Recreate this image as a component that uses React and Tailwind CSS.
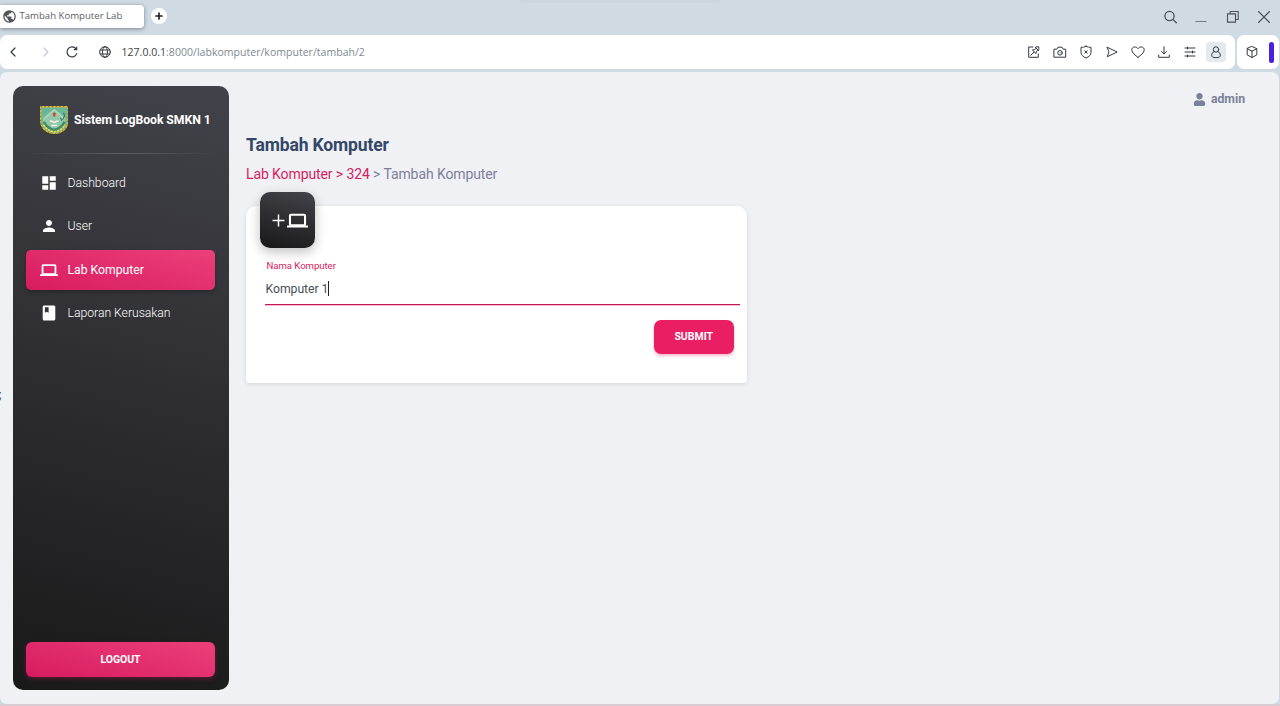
import React from "react";
import { MdDashboard, MdPerson, MdPublic } from "react-icons/md";
import { FaUser } from "react-icons/fa";

function Icon({ children, size = 14, className = "", vb = 14, w = 1 }) {
  return (
    <svg width={size} height={size} viewBox={`0 0 ${vb} ${vb}`} fill="none" stroke="currentColor" strokeWidth={w} strokeLinecap="round" strokeLinejoin="round" className={`shrink-0 ${className}`}>
      {children}
    </svg>
  );
}

function Laptop({ className }) {
  return (
    <svg viewBox="0 0 24 24" fill="none" stroke="currentColor" className={className}>
      <rect x="3.400" y="5.400" width="17.200" height="12" rx="1" strokeWidth="2.400" />
      <path d="M0 18.800h24" strokeWidth="2.400" />
    </svg>
  );
}

function Book({ className }) {
  return (
    <svg viewBox="0 0 18 18" className={className}>
      <path fill="currentColor" fillRule="evenodd" d="M4.200 1.600h9.600c.9 0 1.500.6 1.500 1.500v11.800c0 .9-.6 1.500-1.500 1.500H4.200c-.9 0-1.500-.6-1.500-1.500V3.100c0-.9.600-1.500 1.500-1.500zM4.900 3.200v5.500l1.850-1 1.850 1V3.200z" />
    </svg>
  );
}

function TabStrip() {
  return (
    <div className="flex h-[35px] shrink-0 items-start justify-between">
      <div className="flex items-start">
        <div className="mt-[4.500px] flex h-[23.500px] w-[143.500px] items-center rounded-r-[4px] bg-white pl-[2px] shadow-[0_1px_4px_rgba(60,75,90,0.6)]">
          <MdPublic className="size-[15px] shrink-0 text-[#50555a]" />
          <span className="ml-[2.500px] whitespace-nowrap font-['Open_Sans',sans-serif] text-[9.600px] leading-none text-[#5d6064]">Tambah Komputer Lab</span>
        </div>
        <div className="ml-[7.500px] mt-[8px] flex size-[16px] items-center justify-center rounded-full bg-white text-[#22262a]">
          <Icon size={8} vb={8} w={1.7}><path d="M4 1v6M1 4h6" /></Icon>
        </div>
      </div>
      <div className="-ml-[90px] h-[2px] w-[200px] bg-[#c9d3dd] blur-[1px]" />
      <div className="mr-[9px] mt-[9.500px] flex items-center text-[#4a5055]">
        <Icon size={14} w={1.3}><circle cx="6.500" cy="6" r="4.600" /><path d="M9.900 9.400l3.400 3.400" /></Icon>
        <svg width="12" height="14" viewBox="0 0 12 14" className="ml-[18.500px]"><path d="M.5 11.500h11" stroke="#727980" strokeWidth="1" /></svg>
        <Icon size={14} className="ml-[18.500px]" w={1.1}><path d="M4.200 3.500V1.500h8v8h-2.200M1.500 3.900h8v8.200h-8z" strokeLinejoin="miter" /></Icon>
        <Icon size={14} className="ml-[17.500px]" w={1.1}><path d="M1.500 1.500l11 11M12.500 1.500l-11 11" /></Icon>
      </div>
    </div>
  );
}

function Toolbar() {
  return (
    <div className="flex h-[34px] shrink-0 text-[#343a40]">
      <div className="flex flex-1 items-center rounded-[7px] bg-white">
        <Icon className="ml-[6px]" w={1.2}><path d="M9 3L5 7l4 4" /></Icon>
        <Icon className="ml-[19px] text-[#c3c8cc]" w={1.2}><path d="M5 3l4 4-4 4" /></Icon>
        <Icon className="ml-[12px]" w={1.2}><path d="M11.700 8.600A5 5 0 1 1 11 3.900M11.700 2.200v2.500H9.300" /></Icon>
        <Icon className="ml-[19px]" w={1}><circle cx="7" cy="7" r="5.300" /><ellipse cx="7" cy="7" rx="2.500" ry="5.300" /><path d="M2.200 5h9.600M2.200 9h9.600" /></Icon>
        <span className="ml-[9.500px] flex-1 whitespace-nowrap font-['Open_Sans',sans-serif] text-[10.500px] leading-none tracking-[0.03px] text-[#7d8992]">
          <span className="text-[#3c4145]">127.0.0.1</span>:8000/labkomputer/komputer/tambah/2
        </span>
        <div className="mr-[12px] flex items-center gap-[11.900px]">
          <Icon><path d="M6 2H1.700v10.300h9.600V9" /><path d="M8.300 2.300l3.400 3.400M9.300 3.300l-2.100 1.500-1.800.2 3.600 3.600.3-1.800 1.600-2M7 7l-3.200 3.200M9.300 1.800h2.500v2.500" /></Icon>
          <Icon><path d="M1.300 4.200h2.500l1.200-2h4l1.200 2h2.500v8H1.300z" /><circle cx="7" cy="7.800" r="2.300" /><path d="M6.900 7.800h.2" /></Icon>
          <Icon><path d="M7 1.200c1.700 1 3.300 1.100 5 1.200v5c0 2.700-2.200 4.400-5 5.600-2.800-1.200-5-2.900-5-5.600v-5c1.700-.1 3.300-.2 5-1.200zM5.700 5.700l2.600 2.600M8.300 5.700L5.700 8.300" /></Icon>
          <Icon><path d="M2.300 2.300L12.200 7l-9.900 4.700L3.800 7z" /></Icon>
          <Icon><path d="M7 12.300C4.500 10.400.8 7.800.8 4.800.8 1.700 5 .8 7 3.700c2-2.900 6.200-2 6.200 1.100 0 3-3.700 5.600-6.200 7.500z" /></Icon>
          <Icon><path d="M7 1.700v7M4.500 6.500L7 9l2.500-2.500M1.700 10v2.300h10.600V10" /></Icon>
          <Icon><path d="M2 3h10M2 7h10M2 11h10M4.500 2v2M9.500 6v2M4.500 10v2" /></Icon>
          <div className="-mx-[3px] flex size-[20px] items-center justify-center rounded-[4px] bg-[#e4e9ee]">
            <Icon><circle cx="7" cy="4.500" r="2.700" /><path d="M5.100 6.500C3.500 7.300 2.700 8.800 2.700 10.200c0 1.600 1.200 2.500 4.300 2.500s4.300-.9 4.300-2.500c0-1.400-.8-2.900-2.400-3.700" /></Icon>
          </div>
        </div>
      </div>
      <div className="ml-[2px] mr-[1px] flex w-[42.500px] items-center rounded-[7px] bg-white">
        <Icon className="ml-[8px]"><path d="M7 1.500l4.800 2.200v6.200L7 12.500 2.200 9.900V3.700zM2.200 3.700L7 6.100l4.800-2.400M7 6.100v6.400" /></Icon>
        <div className="ml-[10.500px] h-[21px] w-[5px] rounded-full bg-[#4720e0]" />
      </div>
    </div>
  );
}

function Emblem() {
  return (
    <svg width="28.5" height="28.5" viewBox="0 0 29 29" className="mt-px shrink-0">
      <path d="M.7.700h27.600V15c0 8-6 12-13.800 13.300C6.700 27 .7 23 .7 15z" fill="#69b79a" stroke="#d7bd35" strokeWidth="1.400" />
      <path d="M.7.700h27.600V15c0 8-6 12-13.800 13.300C6.700 27 .7 23 .7 15z" fill="none" stroke="#8d7138" strokeWidth="1.200" strokeDasharray="1.200 2.600" />
      <path d="M3 12L14.500 2.500 26 12v5L14.500 24 3 17z" fill="#91c9aa" />
      <path d="M5 12.500L14.500 4l9.500 8.500" fill="none" stroke="#d5e2c4" strokeWidth=".7" />
      <path d="M4 16c2 5 5 7 10.500 8.500C20 23 23 21 25 16" fill="none" stroke="#3e8c6d" strokeWidth="2.600" />
      <path d="M3.500 19c2 4 6 6.200 11 7.500 5-1.300 9-3.500 11-7.500" fill="none" stroke="#e4d84b" strokeWidth="1.800" strokeDasharray="2.500 .8" />
      <path d="M10 14.500c1.800 0 3 .5 4.500 1.300 1.500-.8 2.700-1.300 4.500-1.300v1.700c-1.800 0-3 .5-4.500 1.300-1.500-.8-2.700-1.300-4.500-1.300zM11.500 19h6v1.600h-6z" fill="#f2f0df" />
      <path d="M14.500 6l1.700 2-1 3h-1.400l-1-3z" fill="#c84b37" />
      <path d="M24 7l1 3-2 4M21 12l1 3" fill="none" stroke="#2e6650" />
    </svg>
  );
}

function NavItem({ icon: Glyph, label, active, className = "" }) {
  return (
    <div className={`flex h-[40px] items-center rounded-[5px] ${active ? "bg-[linear-gradient(195deg,#ec407a,#d81b60)] shadow-[0_2px_4px_rgba(0,0,0,0.25)] font-normal" : "font-light"} ${className}`}>
      <div className="ml-[14px] flex w-[18px] justify-center"><Glyph className="size-[18px] shrink-0" /></div>
      <span className="ml-[9.500px] text-[12.250px] leading-none tracking-[-0.04px]">{label}</span>
    </div>
  );
}

function Sidebar() {
  return (
    <aside className="ml-[12.500px] mt-[14px] flex h-[604px] w-[216.500px] shrink-0 flex-col rounded-[10px] bg-[linear-gradient(195deg,#42424a,#191919)] pl-[13.500px] pr-[14px] text-white">
      <div className="mt-[19px] flex h-[29px] items-center pl-[13.500px]">
        <Emblem />
        <span className="ml-[6px] mt-[2px] whitespace-nowrap text-[12.250px] font-bold leading-none tracking-[-0.06px]">Sistem LogBook SMKN 1</span>
      </div>
      <div className="mt-[19px] h-px shrink-0 bg-[linear-gradient(90deg,transparent,rgba(255,255,255,0.18),transparent)]" />
      <nav className="mt-[9px] flex flex-col">
        <NavItem icon={MdDashboard} label="Dashboard" />
        <NavItem icon={MdPerson} label="User" className="mt-[3px]" />
        <NavItem icon={Laptop} label="Lab Komputer" active className="mt-[4px]" />
        <NavItem icon={Book} label="Laporan Kerusakan" className="mt-[3px]" />
      </nav>
      <button className="mb-[13.500px] mt-auto h-[34.500px] rounded-[6px] bg-[linear-gradient(195deg,#ec407a,#d81b60)] pt-px text-[10.500px] font-bold tracking-[-0.05px] shadow-[0_2px_4px_rgba(216,27,96,0.3)]">LOGOUT</button>
    </aside>
  );
}

function FormCard() {
  return (
    <section className="mt-[22px] h-[177px] w-[501px] rounded-t-[10px] rounded-b-[4px] bg-white px-[7px] shadow-[0_1px_4px_rgba(0,0,0,0.1)]">
      <div className="-mt-[14px] ml-[7px] flex h-[55.500px] w-[55px] items-center justify-center rounded-[10px] bg-[linear-gradient(195deg,#42424a,#191919)] text-white shadow-[0_4px_12px_rgba(0,0,0,0.25)]">
        <div className="mt-[1px] flex items-center pl-[4px]">
          <Icon size={13} vb={12} w={1.4}><path d="M6 .5v11M.5 6h11" strokeLinecap="butt" /></Icon>
          <Laptop className="ml-[2px] size-[21px] shrink-0" />
        </div>
      </div>
      <div className="ml-[12px] border-b border-[#c2185b] shadow-[0_1px_0_rgba(233,30,99,0.3)]">
        <label className="block pl-[1.500px] pt-[12.500px] text-[9.600px] leading-[11px] tracking-[-0.05px] text-[#d81b60]">Nama Komputer</label>
        <div className="mt-[10px] flex h-[23px] items-start pl-[0.500px] text-[12.250px] leading-[16px] tracking-[-0.06px] text-[#495057]">
          <span>Komputer 1</span><span className="h-[15px] w-px bg-[#222]" />
        </div>
      </div>
      <div className="flex justify-end pr-[6.500px] pt-[14.500px]">
        <button className="h-[34.500px] w-[79.500px] rounded-[7px] bg-[#e91e63] pt-px text-[10.500px] font-bold text-white shadow-[0_2px_3px_rgba(233,30,99,0.3)]">SUBMIT</button>
      </div>
    </section>
  );
}

export default function App() {
  return (
    <div className="flex h-[706px] w-[1280px] flex-col overflow-hidden bg-[#d0dae3] font-[Roboto,sans-serif]">
      <TabStrip />
      <Toolbar />
      <div className="mr-px mt-[3px] flex h-[632px] shrink-0 overflow-hidden rounded-[7px] bg-[#f0f1f5]">
        <div className="w-0 pt-[316px] text-[12px] leading-[14px] text-[#344767]"><span className="-ml-[1px] block">;</span></div>
        <Sidebar />
        <main className="ml-[17px] flex flex-1 flex-col">
          <div className="mt-[19px] flex h-[16px] items-center justify-end pr-[34px] text-[#7b809a]">
            <FaUser className="size-[13px]" />
            <span className="ml-[4.500px] text-[12.250px] font-bold leading-none tracking-[-0.03px]">admin</span>
          </div>
          <h1 className="mt-[27px] text-[17.500px] font-bold leading-[22px] tracking-[-0.13px] text-[#344767]">Tambah Komputer</h1>
          <p className="mt-[8px] text-[14px] leading-[20px] tracking-[-0.100px] text-[#7b809a]"><span className="text-[#d81b60]">Lab Komputer &gt; 324</span> &gt; Tambah Komputer</p>
          <FormCard />
        </main>
      </div>
      <div className="flex-1 bg-[#d8cdd5]" />
    </div>
  );
}
